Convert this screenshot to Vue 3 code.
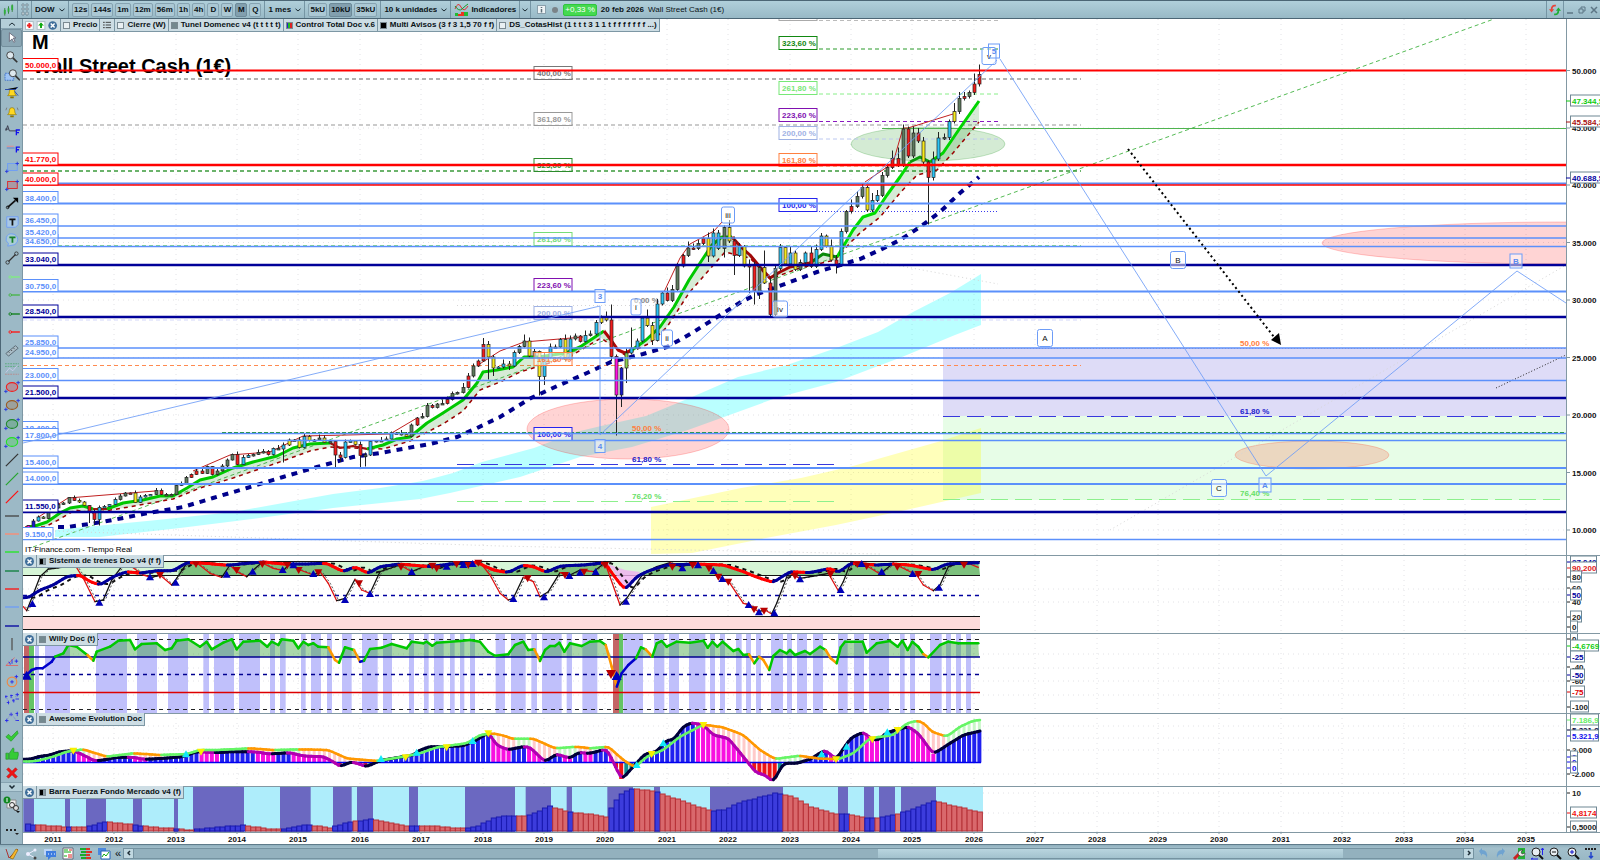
<template>
  <div class="platform">
    <header class="topbar">
      <button class="flat" aria-label="Tipo de vela">
        <svg width="13" height="14" viewBox="0 0 14 14">
          <path d="M3 5v8M7 3v8M11 1v8" stroke="#2f7d32" />
          <path d="M2 7h2v4H2zM6 5h2v4H6zM10 2h2v5h-2z" fill="#2fae3a" />
        </svg>
      </button>
      <i class="sep"></i>
      <button class="flat grip" aria-label="Mover">
        <svg width="8" height="13" viewBox="0 0 8 13">
          <path d="M1 1h2v2H1zM5 1h2v2H5zM1 5h2v2H1zM5 5h2v2H5zM1 9h2v3H1zM5 9h2v3H5z" fill="#e4eef2" stroke="#5c7482" stroke-width=".7" />
        </svg>
      </button>
      <i class="sep"></i>
      <label class="drop">
        <select aria-label="Valor"><option>DOW</option></select>
        <svg width="6" height="4" viewBox="0 0 6 4"><path d="M.5.8 3 3 5.500.8" class="chev" /></svg>
      </label>
      <i class="sep"></i>
      <div class="group">
        <button v-for="t in timeframes" :key="t" class="chip" :class="{ active: t === 'M' }">{{ t }}</button>
      </div>
      <i class="sep"></i>
      <label class="drop">
        <select aria-label="Periodo"><option>1 mes</option></select>
        <svg width="6" height="4" viewBox="0 0 6 4"><path d="M.5.8 3 3 5.500.8" class="chev" /></svg>
      </label>
      <i class="sep"></i>
      <div class="group">
        <button v-for="u in units" :key="u" class="chip" :class="{ active: u === '10kU' }">{{ u }}</button>
      </div>
      <i class="sep"></i>
      <label class="drop">
        <select aria-label="Unidades"><option>10 k unidades</option></select>
        <svg width="6" height="4" viewBox="0 0 6 4"><path d="M.5.8 3 3 5.500.8" class="chev" /></svg>
      </label>
      <i class="sep"></i>
      <button class="flat indicators">
        <svg width="15" height="14" viewBox="0 0 15 14">
          <path d="M1 6Q4-2 7 4t7-1" fill="none" stroke="#d33" />
          <path d="M1 3q4 6 7 3t6-5" fill="none" stroke="#1a9b2c" />
          <path d="M1 10h3v3H1zM10 9h4v4h-4z" fill="#22bb33" />
          <path d="M4 11h3v2H4zM7 9h3v4H7z" fill="#ee3322" />
        </svg>
        <span>Indicadores</span>
      </button>
      <i class="sep"></i>
      <button class="flat" aria-label="Más indicadores">
        <svg width="6" height="4" viewBox="0 0 6 4"><path d="M.5.8 3 3 5.500.8" class="chev" /></svg>
      </button>
      <i class="sep"></i>
      <div class="quote">
        <svg width="9" height="9" viewBox="0 0 9 9">
          <rect x=".5" y=".5" width="8" height="8" fill="#eef3f5" stroke="#8aa0ac" />
          <path d="M4.500 2v1M4.500 4v3.500" stroke="#5b6d78" stroke-width="1.500" />
        </svg>
        <i class="dot"></i>
        <span class="change">+0,33 %</span>
        <b>20 feb 2026</b>
        <span>Wall Street Cash (1€)</span>
      </div>
      <div class="window-buttons">
        <i class="sep"></i>
        <button class="flat" aria-label="Actualizar">
          <svg width="12" height="12" viewBox="0 0 14 14">
            <path d="M8 2Q3 1 3 7" fill="none" stroke="#e8443a" stroke-width="2" />
            <path d="M0 6h6L3 10z" fill="#e8443a" />
            <path d="M6 12q5 1 5-5" fill="none" stroke="#1fae35" stroke-width="2" />
            <path d="M8 8h6l-3-4z" fill="#1fae35" />
          </svg>
        </button>
        <i class="sep"></i>
        <button class="flat win" aria-label="Minimizar">
          <svg width="8" height="8" viewBox="0 0 8 8"><path d="M1 7h6" stroke="#5d7685" stroke-width="1.500" /></svg>
        </button>
        <button class="flat win" aria-label="Restaurar">
          <svg width="8" height="8" viewBox="0 0 8 8"><path d="M1 3h4v4H1zM3 3V1h4v4H5" fill="none" stroke="#5d7685" /></svg>
        </button>
        <button class="flat win" aria-label="Cerrar">
          <svg width="8" height="8" viewBox="0 0 8 8"><path d="M1 1l6 6M7 1 1 7" stroke="#5d7685" stroke-width="1.500" /></svg>
        </button>
      </div>
    </header>

    <div class="workspace">
      <nav class="tools" aria-label="Herramientas de dibujo">
        <button class="scroll-tools" aria-label="Subir">
          <svg width="8" height="4" viewBox="0 0 8 4"><path d="M1 3.500 4 1l3 2.500" class="chev" /></svg>
        </button>
        <div class="tool-list">
          <button v-for="(icon, i) in toolIcons" :key="i" class="tool" :class="{ selected: i === 0 }" :aria-label="'Herramienta ' + (i + 1)">
            <svg width="16" height="14" viewBox="0 0 18 16" v-html="icon"></svg>
          </button>
        </div>
        <button class="scroll-tools down" aria-label="Bajar">
          <svg width="8" height="4" viewBox="0 0 8 4"><path d="M1.500.5 4 3l2.500-2.500" class="chev" stroke-width="1.500" /></svg>
        </button>
        <button class="tool-large" aria-label="Propiedades">
          <svg width="18" height="18" viewBox="0 0 18 18">
            <path d="M4 4h9v8H4z" fill="#eee" stroke="#888" />
            <circle cx="4" cy="4" r="3.500" fill="#118822" />
            <path d="M4 2v4" stroke="#fff" />
            <circle cx="9" cy="9" r="2.500" fill="#eee" stroke="#333" />
            <circle cx="13" cy="12" r="2.500" fill="#ddd" stroke="#333" />
            <path d="M13 15h4l-2 2z" fill="#111" />
          </svg>
        </button>
        <button class="tool-large" aria-label="Más">
          <svg width="18" height="10" viewBox="0 0 18 10">
            <path d="M3 3h2v2H3zM7 3h2v2H7zM11 3h2v2h-2zM12 7h4l-2 2z" fill="#222" />
          </svg>
        </button>
      </nav>

      <main class="charts">
        <!-- Price -->
        <section class="pane">
          <div class="pane-tabs">
            <span class="tab">
              <svg width="33" height="11" viewBox="0 0 34 11">
                <rect x=".5" y="1.500" width="8" height="8" fill="#fff" stroke="#aabbc4" />
                <path d="M4.500 3v5M2 5.500h5" stroke="#e22" stroke-width="2" />
                <rect x="12.500" y="1.500" width="8" height="8" fill="#fff" stroke="#aabbc4" />
                <path d="M16.500 3.500V8" stroke="#1a1" stroke-width="2" /><path d="M13.500 5.500h6l-3-3z" fill="#1a1" />
                <circle cx="28.500" cy="5.500" r="4.500" fill="#3f6e9a" />
                <path d="m26.500 3.500 4 4m0-4-4 4" stroke="#fff" stroke-width="1.500" />
              </svg>
            </span>
            <button class="tab"><i class="swatch"></i>Precio</button>
            <button class="tab list-tab" aria-label="Lista">
              <svg width="8" height="8" viewBox="0 0 9 8"><path d="M0 1h2M0 4h2M0 7h2M3 1h6M3 4h6M3 7h6" stroke="#333" /></svg>
            </button>
            <button class="tab"><i class="swatch"></i>Cierre (W)</button>
            <button class="tab"><i class="swatch grey"></i>Tunel Domenec v4 (t t t t t)</button>
            <button class="tab"><i class="swatch stripes"></i>Control Total Doc v.6</button>
            <button class="tab"><i class="swatch black"></i>Multi Avisos (3 f 3 1,5 70 f f)</button>
            <button class="tab"><i class="swatch"></i>DS_CotasHist (1 t t t 3 1 1 t f f f f f f f ...)</button>
          </div>
          <svg class="plot" viewBox="23 19 1577 536">
            <line v-for="x in yearX" :key="x" :x1="x" :x2="x" y1="19" y2="555" class="grid" />
            <line v-for="v in priceTicks" :key="v" x1="23" x2="1566" :y1="py(v)" :y2="py(v)" class="grid" />

            <rect x="943" y="348" width="623" height="68" fill="#dedcf7" />
            <rect x="943" y="416" width="623" height="84" fill="#e7fde7" />
            <polygon :points="cyanCloud" fill="#00ffff" fill-opacity=".27" />
            <polygon :points="yellowCloud" fill="#ffff00" fill-opacity=".27" />
            <ellipse v-for="e in ellipses" :key="e.cx" :cx="e.cx" :cy="e.cy" :rx="e.rx" :ry="e.ry" :fill="e.c" :stroke="e.c" fill-opacity=".17" stroke-opacity=".2" />
            <path d="M33 547 1494 19" class="thin" stroke="#55bb55" stroke-dasharray="4 3" />
            <path d="M23 530 500 546 880 554M852 257 998 284M1110 530 1566 265M457 305.500H836" class="thin" stroke="#d6d6d6" stroke-dasharray="1 3" />
            <path d="M1496 388 1566 355" class="thin" stroke="#222" stroke-dasharray="1 2" />
            <path d="M882 128.500H1566" stroke="#4fb34f" />

            <line v-for="(f, i) in fibLines" :key="'f' + i" :x1="f.x1" :x2="f.x2" :y1="f.y" :y2="f.y" :stroke="f.c" :stroke-width="f.w || 1" :stroke-dasharray="f.d" />
            <text v-for="(f, i) in fibTexts" :key="'t' + i" :x="f.x" :y="f.y" :fill="f.c">{{ f.t }}</text>

            <text x="32" y="49" class="title">M</text>
            <text x="33" y="73" class="title">Wall Street Cash (1€)</text>
            <text x="25" y="552" class="plain">IT-Finance.com - Tiempo Real</text>

            <polygon :points="tunnel" fill="#1a8f1a" fill-opacity=".18" />
            <polyline :points="slowMa" fill="none" stroke="#00008b" stroke-width="4" stroke-dasharray="6 6" />
            <polyline v-for="(z, i) in zigzags" :key="'z' + i" :points="z" fill="none" stroke="#c02020" />
            <polyline :points="lowerMa" fill="none" stroke="#990000" stroke-width="1.500" stroke-dasharray="4 4" />
            <polyline v-for="(m, i) in fastMa" :key="'m' + i" :points="m.p" fill="none" :stroke="m.c" :stroke-width="m.w" stroke-linejoin="round" />
            <g v-for="(k, i) in candles" :key="'k' + i">
              <line :x1="k.x" :x2="k.x" :y1="k.hi" :y2="k.lo" stroke="#222" />
              <rect :x="k.x - 1.500" :y="k.top" width="3" :height="k.h" :fill="k.c" stroke="#222" stroke-width=".7" />
            </g>
            <g v-for="(f, i) in fibBoxes" :key="'b' + i">
              <rect :x="f.x" :y="f.y - 12.500" width="38" height="13" fill="#fff" fill-opacity=".6" :stroke="f.c" />
              <text :x="f.x + 3" :y="f.y - 3" :fill="f.c">{{ f.t }}</text>
            </g>

            <line v-for="l in levels" :key="'l' + l.v" x1="23" x2="1566" :y1="py(l.v)" :y2="py(l.v)" :stroke="l.c" :stroke-width="l.w" />
            <g v-for="l in levelLabels" :key="'v' + l.v">
              <rect x="22" :y="py(l.v) - 12" :width="l.v < 10000 ? 31 : 36" height="12" fill="#fff" :stroke="l.c" />
              <text x="25" :y="py(l.v) - 3" :fill="l.c">{{ l.t }}</text>
            </g>

            <path d="M23 443 600 306V435L997 60M1000 59 1266 476 1517 271 1566 303" fill="none" stroke="#6d9cf7" stroke-opacity=".85" />
            <path d="M1128 149 1274 337" stroke="#000" stroke-width="2" stroke-dasharray="2 3" />
            <path d="M1271 340 1279 333 1281 345Z" />
            <g v-for="(w, i) in waves" :key="'w' + i">
              <rect :x="w.x - w.w / 2" :y="w.y - w.h / 2" :width="w.w" :height="w.h" :rx="w.r" fill="#fff" :fill-opacity="w.clear ? 0 : 0.5" stroke="#6d9cf7" />
              <text :x="w.x" :y="w.y + 3" text-anchor="middle" :class="{ plain: w.r }" :fill="w.r ? '#111' : '#5a8af0'">{{ w.t }}</text>
            </g>

            <rect x="1566" y="19" width="34" height="536" fill="#fff" />
            <path d="M1566.500 19V555" stroke="#8298a3" />
            <g v-for="v in priceTicks" :key="'p' + v">
              <path :d="`M1567 ${py(v)}h3`" stroke="#8298a3" />
              <text x="1572" :y="py(v) + 3" fill="#111">{{ v / 1000 }}.000</text>
            </g>
            <g v-for="a in priceTags" :key="a.t">
              <path :d="`M1566 ${a.y}h4`" :stroke="a.c" />
              <rect x="1570.500" :y="a.y - 6" width="34" height="11" class="tag" />
              <text x="1572" :y="a.y + 3" :fill="a.c">{{ a.t }}</text>
            </g>
          </svg>
        </section>

        <!-- Indicators -->
        <section v-for="p in panes" :key="p.id" class="pane">
          <div class="pane-tabs">
            <button class="tab" :aria-label="'Cerrar ' + p.title">
              <svg width="9" height="9" viewBox="0 0 9 9">
                <circle cx="4.500" cy="4.500" r="4.500" fill="#3f6e9a" />
                <path d="m2.500 2.500 4 4m0-4-4 4" stroke="#fff" stroke-width="1.500" />
              </svg>
            </button>
            <span class="tab"><i class="swatch" :class="p.swatch"></i>{{ p.title }}</span>
          </div>
          <svg class="plot" :viewBox="`23 ${p.y} 1577 ${p.h}`">
            <line v-for="x in yearX" :key="x" :x1="x" :x2="x" :y1="p.y" :y2="p.y + p.h" class="grid" />
            <line v-for="y in p.rows" :key="y" x1="23" x2="1566" :y1="y" :y2="y" class="grid" />

            <g v-if="p.id === 'trenes'">
              <rect x="23" y="562" width="957" height="13" fill="#d6f5d6" />
              <polygon :points="trenFill" fill="#007800" fill-opacity=".42" />
              <rect x="23" y="617" width="957" height="12" fill="#fddbdb" />
              <path d="M23 561.500H980M23 575.500H980M23 616.500H980M23 629.500H980" stroke="#111" />
              <path d="M23 595.500H980" stroke="#0000a0" stroke-width="1.500" stroke-dasharray="4 4" />
              <polygon points="605,563 612,569 622,584 626,588 640,572 625,570" fill="#f0b0f0" fill-opacity=".8" />
              <polyline :points="trenLag" fill="none" stroke="#111" stroke-width="2" stroke-dasharray="4 4" />
              <polyline :points="trenFastLag" fill="none" stroke="#555" stroke-dasharray="2 2" />
              <path v-for="(s, i) in trenFast" :key="i" :d="s.d" :stroke="s.up ? '#111' : '#dd1111'" stroke-width="1.300" stroke-linecap="round" />
              <path v-for="(s, i) in trenSlow" :key="'s' + i" :d="s.d" :stroke="s.up ? '#000099' : '#ff0000'" stroke-width="3" stroke-linecap="round" />
              <path v-for="(m, i) in trenMarks" :key="'m' + i" :d="m.d" :fill="m.c" />
            </g>

            <g v-else-if="p.id === 'willy'">
              <rect v-for="(b, i) in willyBands" :key="i" :x="b.x" y="633" :width="b.w" height="80" fill="#c0c0fb" />
              <path d="M24 646h5v67h-5zM613 633h6v80h-6z" fill="#c46464" />
              <path d="M29 646h5v67h-5zM619 633h4v80h-4z" fill="#64c464" />
              <polygon :points="willyFill" fill="#2a9a2a" fill-opacity=".4" />
              <path d="M23 639.500H980M23 709.500H980" stroke="#222" stroke-dasharray="4 4" />
              <path d="M23 657H980" stroke="#000090" stroke-width="1.500" />
              <path d="M23 674.500H980" stroke="#000090" stroke-width="1.500" stroke-dasharray="4 4" />
              <path d="M23 692.500H980" stroke="#dd0000" stroke-width="1.500" />
              <path v-for="(s, i) in willyLine" :key="'w' + i" :d="s.d" :stroke="s.c" stroke-width="2.500" stroke-linecap="round" />
              <path v-for="(m, i) in willyMarks" :key="'m' + i" :d="m.d" :fill="m.c" />
            </g>

            <g v-else-if="p.id === 'awesome'">
              <g v-for="(b, i) in aoBars" :key="i">
                <line :x1="b.x" :x2="b.x" :y1="b.s" :y2="b.a" :stroke="b.pale" stroke-width="3" />
                <line :x1="b.x" :x2="b.x" y1="762.500" :y2="b.a" :stroke="b.c" stroke-width="4" />
              </g>
              <path d="M23 762.500H981" stroke="#0000ee" stroke-width="1.500" />
              <path v-for="(s, i) in aoLine" :key="'a' + i" :d="s.d" :stroke="s.up ? '#000038' : '#b000b0'" stroke-width="3" stroke-linecap="round" />
              <path v-for="(s, i) in aoSignal" :key="'s' + i" :d="s.d" :stroke="s.up ? '#66f566' : '#ff9800'" stroke-width="2.500" stroke-linecap="round" />
              <path v-for="(m, i) in aoMarks" :key="'m' + i" :d="m.d" :fill="m.c" />
            </g>

            <g v-else>
              <rect x="23" y="786" width="960" height="46" fill="#aeedfb" />
              <rect v-for="(b, i) in fuerzaBands" :key="i" :x="b.x" y="786" :width="b.w" height="46" fill="#6b68c1" />
              <rect v-for="(b, i) in fuerzaBars" :key="'b' + i" :x="b.x - 2" :y="b.y" width="5" :height="831 - b.y" :fill="b.up ? '#3c3cdc' : '#d9686c'" :stroke="b.up ? '#1a1ab0' : '#b83238'" />
            </g>

            <rect x="1566" :y="p.y" width="34" :height="p.h" fill="#fff" />
            <path :d="`M1566.500 ${p.y}v${p.h}`" stroke="#8298a3" />
            <g v-for="(a, i) in p.labels" :key="i">
              <path :d="`M1567 ${a.y}h3`" :stroke="a.c" />
              <rect v-if="a.w" x="1570.500" :y="a.y - 6" :width="a.w" height="11" class="tag" />
              <text x="1572" :y="a.y + 3" :fill="a.c">{{ a.t }}</text>
            </g>
            <path :d="`M23 ${p.y + 0.5}H1600`" stroke="#8298a3" />
          </svg>
        </section>

        <svg class="plot" viewBox="23 832 1577 12">
          <path d="M23 832.500H1600" stroke="#8298a3" />
          <g v-for="(x, i) in yearX" :key="x">
            <path :d="`M${x} 832v2`" stroke="#8298a3" />
            <text :x="x" y="842" text-anchor="middle" fill="#111">{{ 2011 + i }}</text>
          </g>
        </svg>
      </main>
    </div>

    <footer class="bottombar">
      <button class="flat first" aria-label="Dibujar">
        <svg width="14" height="13" viewBox="0 0 14 13">
          <path d="M1 2l3 9 9-9" fill="none" stroke="#a33" /><path d="m5 11 6-9 2 1-5 9z" fill="#f5b82e" stroke="#8a5a00" stroke-width=".6" />
        </svg>
      </button>
      <button v-for="(icon, i) in footerIcons" :key="i" class="flat" :aria-label="'Acción ' + (i + 1)">
        <svg width="14" height="13" viewBox="0 0 14 13" v-html="icon"></svg>
      </button>
      <button class="flat collapse">«</button>
      <button class="arrow" aria-label="Desplazar a la izquierda">
        <svg width="4" height="6" viewBox="0 0 4 6"><path d="M3 1 1 3l2 2" class="chev" stroke-width="1.500" /></svg>
      </button>
      <div class="track"><div class="thumb"></div></div>
      <button class="arrow" aria-label="Desplazar a la derecha">
        <svg width="4" height="6" viewBox="0 0 4 6"><path d="m1 1 2 2-2 2" class="chev" stroke-width="1.500" /></svg>
      </button>
      <div class="zoom-buttons">
        <button v-for="(icon, i) in zoomIcons" :key="i" class="flat" :aria-label="'Zoom ' + (i + 1)">
          <svg width="14" height="13" viewBox="0 0 14 13" v-html="icon"></svg>
        </button>
      </div>
    </footer>
  </div>
</template>

<script setup>
const timeframes = ['12s', '144s', '1m', '12m', '56m', '1h', '4h', 'D', 'W', 'M', 'Q'];
const units = ['5kU', '10kU', '35kU'];

// ---------- scales ----------
const py = (v) => Math.round((70.3 + (50000 - v) * 0.01149) * 2) / 2;
const mx = (m) => 53.2 + m * 5.117; // months since January 2011
const yearX = Array.from({ length: 25 }, (_, i) => Math.round(52.7 + i * 61.4));
const priceTicks = [50000, 45000, 40000, 35000, 30000, 25000, 20000, 15000, 10000];

// ---------- toolbar icons ----------
const blue = '#2433dd';
const seg = (c) => `<path d="M8 8h10" stroke="${c}" stroke-width="1.5"/><circle cx="7" cy="8" r="1.500" fill="none" stroke="${c}"/>`;
const diag = (c) => `<path d="M2 15 16 1" stroke="${c}" stroke-width="1.500"/>`;
const flatLine = (c) => `<path d="M1 8h16" stroke="${c}" stroke-width="1.500"/>`;
const oval = (c) => `<ellipse cx="9" cy="8" rx="6.500" ry="5" fill="${c}" fill-opacity=".25" stroke="${c}" stroke-width="1.200"/><path d="M14 3h4M16 1v4M0 13h4M2 11v4" stroke="${blue}"/>`;
const box = (c) => `<rect x="4" y="4" width="11" height="8" fill="${c}" fill-opacity=".2" stroke="${c}"/><path d="M13 4h4M15 2v4M1 13h4M3 11v4" stroke="${blue}"/>`;
const lens = '<circle cx="7" cy="6" r="4" fill="#dde8ee" stroke="#333"/><path d="m10 9 5 5" stroke="#333" stroke-width="2"/>';
const bell = '<path d="M4 11q2-1 2-5 0-3 3-3t3 3q0 4 2 5z" fill="#ffd820" stroke="#8b7300" stroke-width=".7"/><path d="M7 13h4" stroke="#8b7300" stroke-width="2"/>';

const toolIcons = [
  '<path d="M6 2v10l3-3 2 4 1.500-1-2-4h3z" fill="#fff" stroke="#667"/>',
  lens,
  '<rect x="1" y="6" width="10" height="8" fill="#9ec4f5" stroke="#3b70c8" stroke-dasharray="2 1"/><g transform="translate(3 0)">' + lens + '</g>',
  bell + '<path d="M1 4h12l3-3M12 6l4 5" stroke="#24a" />',
  bell + '<path d="M3 3 2 6M15 3l1 3" stroke="#777"/>',
  '<path d="M2 9 4 3l2 6M1 7h4M6 9h8" stroke="#334" fill="none"/><path d="M14 14V8h4M14 11h3" stroke="#11e" stroke-width="1.500" fill="none"/>',
  '<path d="M3 6h8" stroke="#e88"/><path d="M3 8h9" stroke="#57c"/><path d="M14 13V7h4M14 10h3" stroke="#11e" stroke-width="1.500" fill="none"/>',
  box('#6d9cf7'),
  box('#e02020'),
  '<path d="m4 13 9-8" stroke="#111" stroke-width="2"/><path d="M10 2h6v6z"/><circle cx="4" cy="13" r="1.500" fill="none" stroke="#111"/>',
  '<path d="M3 2h13v9l-3 3H3z" fill="#a9c8e4" stroke="#6d9cf7"/><path d="M6 5h7M9.500 5v7" stroke="#111" stroke-width="2"/>',
  '<path d="M9 1a6 6 0 1 1 0 13l-5 1 1-3A6 6 0 0 1 9 1z" fill="#a9ccd6" stroke="#6d9cf7"/><path d="M6 5h7M9.500 5v6" stroke="#18802a" stroke-width="2"/>',
  '<path d="m5 12 8-8" stroke="#333" stroke-width="1.500"/><circle cx="4" cy="13" r="2" fill="none" stroke="#333"/><circle cx="14" cy="3" r="2" fill="none" stroke="#333"/>',
  seg('#7ef07e'),
  seg('#44b544'),
  seg('#0b7d16'),
  seg('#ff1010'),
  '<path d="M2 12 13 3l3 3L5 15z" fill="#a9bcc6" stroke="#55646e"/><path d="m5 10 1 1M8 8l1 1M11 6l1 1" stroke="#333"/>',
  '<path d="M1 2h16M1 5h16" stroke="#55aa77" stroke-dasharray="2 1"/><path d="m2 12 4-5 4 3 5-6" stroke="#cce" fill="none"/><path d="M1 14h16" stroke="#b88" stroke-dasharray="2 1"/>',
  oval('#f01f1f'),
  oval('#9b5a20'),
  oval('#1f8a2a'),
  oval('#22e022'),
  diag('#333'),
  diag('#27a52f'),
  diag('#ff1010'),
  flatLine('#444'),
  flatLine('#ff8a70'),
  flatLine('#20e820'),
  flatLine('#0b7d3a'),
  flatLine('#ff1010'),
  flatLine('#6d9cf7'),
  flatLine('#0000a0'),
  '<path d="M9 1v14" stroke="#555" stroke-width="1.500"/>',
  '<path d="M2 12 12 3M2 12h14" stroke="#d66" /><path d="M7 11q0-3-2-3M9 5v5M12 7h4M14 5v4" stroke="#22e" fill="none"/>',
  '<circle cx="9" cy="9" r="5.500" fill="none" stroke="#ee8844" stroke-width="1.300"/><path d="M7 9h4M9 7v4M14 1v4M12 3h4" stroke="#22e"/>',
  '<path d="M1 5h3M3 12h3M7 4h3M9 10h3M13 3h4M13 8h4M15 1v4M2 4v3M8 3v4M5 10v4M11 8v4" stroke="#22e"/><path d="m3 7 2 4M9 6l1 4M13 5l2 3" stroke="#77c" stroke-dasharray="1 1"/>',
  '<path d="M1 12h4M3 10v4M6 5h4M8 3v4M13 12h4M13 4h3M15 2v5" stroke="#22e"/><path d="m4 10 4-6 6 8" stroke="#77c" fill="none" stroke-dasharray="1 1"/>',
  '<path d="m2 9 3-3 3 3 7-7 1 3-8 9z" fill="#35cc35" stroke="#16861b" stroke-width=".6"/>',
  '<path d="M2 7h3v7H2zM6 7l4-6q2 0 1 5h5q1 2-1 8H6z" fill="#35cc35" stroke="#16861b" stroke-width=".6"/>',
  '<path d="m3 4 2-2 4 4 4-4 2 2-4 4 4 4-2 2-4-4-4 4-2-2 4-4z" fill="#f01515" stroke="#b00" stroke-width=".6"/>',
];

const footerIcons = [
  '<path d="m3 7 7-4M3 7l7 4" stroke="#eef"/><circle cx="3" cy="7" r="2" fill="#eef"/><circle cx="10" cy="3" r="1.500" fill="#eef"/><circle cx="10" cy="11" r="1.500" fill="#444"/>',
  '<path d="M1 2h8v6H1z" fill="#bcd4f5"/><path d="M3 4h10v6H8l-3 3v-3H3z" fill="#3d7de0"/><path d="M5 7h1M8 7h1M11 7h1" stroke="#fff"/>',
  '<path d="M2 1h10v11H2z" fill="#fff" stroke="#667"/><path d="M3 3h4M3 5h7M3 9h3" stroke="#1a1"/><path d="M8 3h3M7 8h4M7 10h4" stroke="#d22"/>',
  '<path d="M1 1h6v2H1zM2 4h5v2H2zM1 7h6v2H1zM2 10h5v2H2z" fill="#1aaa2c"/><path d="M7 1h4v2H7zM7 4h6v2H7zM7 7h4v2H7zM7 10h5v2H7z" fill="#dd3324"/>',
  '<path d="M1 1h8v7H1z" fill="#4b88dd"/><path d="M4 4h9v8H4z" fill="#fff" stroke="#2764bb"/><path d="m5 10 2-3 2 2 3-4" stroke="#1a1" fill="none"/>',
];

const zoomLens = '<circle cx="6" cy="5" r="4" fill="#e8eef2" stroke="#222"/><path d="m9 8 4 4" stroke="#111" stroke-width="2"/>';
const zoomIcons = [
  '<path d="m3 4 3-3v2q6 0 5 8-1-4-5-4v2z" fill="#6fa3d0"/>',
  '<path d="M11 4 8 1v2q-6 0-5 8 1-4 5-4v2z" fill="#6fa3d0"/>',
  '<path d="M6 1h7v11H6z" fill="#24b336"/><path d="m2 12 6-6" stroke="#c22" stroke-width="3"/><path d="M6 7q0-4 5-4L9 5l1 2 3-1q0 4-5 3z" fill="#eee" stroke="#333" stroke-width=".6"/>',
  zoomLens + '<path d="M12.500 1v7M11 3l1.500-2L14 3M1 12h7M3 11l-2 1" stroke="#22e" fill="none"/>',
  zoomLens + '<path d="M4 5h4" stroke="#111"/>',
  zoomLens + '<path d="M4 5h4M6 3v4" stroke="#11c"/>',
  '<path d="M1 2h12" stroke="#222" stroke-width="2" stroke-dasharray="2 1"/><path d="M7 5v6M5 9l2 2 2-2" stroke="#24c" stroke-width="1.500" fill="none"/>',
];

// ---------- monthly candles, August 2010 to February 2026 ----------
const years = [
  ['10.01 10.79 11.12 11.01 11.58', 'mnclg'],
  ['11.89 12.23 12.32 12.81 12.57 12.41 12.14 11.61 10.91 11.96 12.05 12.22', 'ggggryyrrccc'],
  ['12.63 12.95 13.21 13.21 12.39 12.88 13.01 13.09 13.44 13.10 13.03 13.10', 'cggrycccgrgg'],
  ['13.86 14.05 14.58 14.84 15.12 14.91 15.50 14.81 15.13 15.55 16.09 16.58', 'gcgrrrgrgggg'],
  ['15.70 16.32 16.46 16.58 16.72 16.83 16.56 17.10 17.04 17.39 17.83 17.82', 'rccgggrcgcyg'],
  ['17.16 18.13 17.78 17.84 18.01 17.62 17.69 16.53 16.28 17.66 17.72 17.43', 'ycycgygrrccy'],
  ['16.47 16.52 17.69 17.77 17.79 17.93 18.43 18.40 18.31 18.14 19.12 19.76', 'rgcgggcggygr'],
  ['19.86 20.81 20.66 20.94 21.01 21.35 21.89 21.95 22.41 23.38 24.27 24.72', 'ggrggrgggrgr'],
  ['26.15 25.03 24.10 24.16 24.42 24.27 25.42 25.97 26.46 25.12 25.54 23.33', 'ryyccycggygy'],
  ['25.00 25.92 25.93 26.59 24.82 26.60 26.86 26.40 26.92 27.05 28.05 28.54', 'ccgcycgrcgcy'],
  ['28.26 25.10 21.75 24.10 25.38 25.81 26.43 28.43 27.78 26.50 29.64 30.61', 'yrmnlcccyycc'],
  ['29.98 30.93 32.98 33.87 34.53 34.50 34.94 35.36 33.84 35.82 34.48 36.34', 'rggrgrgryccg'],
  ['35.13 33.89 34.68 32.98 32.99 30.78 32.85 31.51 28.73 32.73 34.59 33.15', 'yrcyrrgyrgcy'],
  ['34.09 32.66 33.27 34.10 32.91 34.41 35.56 34.72 33.51 33.05 35.95 37.69', 'cygcrccyyrcg'],
  ['38.15 39.00 39.81 37.82 38.69 39.12 40.84 41.56 42.33 41.76 44.91 42.54', 'rggyccggrrgr'],
  ['44.54 43.84 42.00 40.67 42.27 44.09 44.13 45.54 46.40 47.56 47.72 48.06', 'gryrccgcygrg'],
  ['48.80 49.65', 'rr'],
];
const bodyColors = { g: '#5d7a5d', r: '#f21d1d', y: '#f7ea1c', c: '#2cc4f5', m: '#ff10e0', n: '#1a1acc', l: '#8fd14f' };
// months whose wick runs well past the body
const lows = { 7: 10.6, 8: 10.55, 9: 10.4, 45: 15.85, 55: 15.37, 56: 15.9, 60: 15.45, 61: 15.5, 85: 23.1, 86: 23.4, 89: 23.9, 95: 21.7, 96: 22.6, 109: 24.7, 110: 18.2, 111: 20.7, 112: 22.8, 117: 26.1, 128: 33.3, 131: 33.7, 133: 32.2, 136: 30.6, 137: 29.6, 138: 30.1, 140: 28.6, 141: 28.6, 153: 32.3, 171: 36.6, 172: 40.4 };
const highs = { 84: 26.7, 92: 27.0, 109: 29.6, 113: 27.6, 116: 29.2, 118: 30.1, 132: 36.95, 139: 34.3, 145: 34.3, 165: 43.3, 167: 45.1, 168: 45.1, 169: 45.0, 180: 49.7, 181: 50.5 };

const closes = years.flatMap(([c]) => c.split(' ').map(Number));
const codes = years.map((y) => y[1]).join('');
const candles = closes.map((close, i) => {
  const open = i ? closes[i - 1] : 10.4;
  const m = i - 5;
  const hi = highs[m] || Math.max(open, close) + close * 0.004 * (1 + (i * 7) % 4);
  const lo = lows[m] || Math.min(open, close) - close * 0.004 * (1 + (i * 5) % 5);
  const top = py(Math.max(open, close) * 1000);
  return {
    x: Math.round(mx(m)) + 0.5,
    top,
    h: Math.max(py(Math.min(open, close) * 1000) - top, 1.5),
    hi: py(hi * 1000),
    lo: py(lo * 1000),
    c: bodyColors[codes[i]],
  };
});

// ---------- price overlays ----------
const cyanCloud = '55,530 157,520 233,512 283,503 333,494 380,488 423,481 453,473 482,462 534,448 576,432 601,426 646,416 692,397 738,377 787,365 839,347 878,332 913,312 950,293 973,279 981,274 981,325 955,335 902,357 836,382 776,398 724,417 688,430 632,447 580,457 520,477 450,493 420,499 333,508 267,517 180,528 100,537 55,537';
const yellowCloud = '651,507 741,488 801,478 853,466 941,441 981,428 981,493 906,510 836,525 766,538 692,553 651,554';
const ellipses = [
  { cx: 628, cy: 429, rx: 101, ry: 30, c: '#ff0000' },
  { cx: 928, cy: 144, rx: 77, ry: 17, c: '#008800' },
  { cx: 1560, cy: 243, rx: 238, ry: 21, c: '#ff0000' },
  { cx: 1312, cy: 455, rx: 77, ry: 14, c: '#ff2000' },
];
const slowMa = '58,527 67,527 90,524 113,520 143,514 183,507 213,498 247,488 283,477 317,467 353,457 380,453 430,444 457,437 477,428 500,417 531,398 555,387 587,373 611,362 643,354 667,347 692,333 717,317 741,302 755,295 790,282 817,272 837,266 860,259 880,250 900,240 920,227 940,212 960,193 979,177';
const lowerMa = '25,527 45,527 60,519 75,510 93,513 123,508 173,499 200,488 233,478 277,463 310,451 330,447 353,448 383,449 410,441 443,424 463,411 480,390 500,382 520,372 569,357 601,338 625,355 650,343 667,327 689,293 709,270 725,252 750,258 770,279 800,268 835,260 850,243 860,233 880,217 900,193 917,175 937,170 953,153 979,122';
const upperMa = '27,527 35,526 47,522 60,513 70,508 83,506 93,509 107,509 123,503 143,500 160,496 173,496 187,488 200,480 213,477 233,468 253,462 277,456 293,448 310,444 330,443 340,448 353,446 367,449 383,445 397,439 410,437 427,423 443,413 463,400 477,383 483,372 497,370 513,367 524,357 538,357 566,353 580,347 604,331 611,340 618,350 625,353 632,350 646,340 660,327 674,307 689,280 702,260 712,245 722,237 732,237 741,247 750,255 760,267 770,278 780,272 790,267 810,263 823,254 837,257 843,247 853,230 863,217 875,213 887,195 900,177 910,162 920,157 930,162 943,153 960,128 979,101';
const tunnel = upperMa + ' ' + lowerMa.split(' ').reverse().join(' ');
const between = (a, b) => upperMa.split(' ').filter((p) => parseInt(p) >= a && parseInt(p) <= b).join(' ');
const fastMa = [
  { p: between(27, 93), c: '#00c800', w: 3 },
  { p: between(93, 123), c: '#a02010', w: 2 },
  { p: between(107, 330), c: '#00c800', w: 3 },
  { p: between(330, 383), c: '#a01010', w: 2 },
  { p: between(367, 604), c: '#00c800', w: 3 },
  { p: between(604, 632), c: '#b00808', w: 3 },
  { p: between(632, 732), c: '#00c800', w: 3 },
  { p: between(732, 810), c: '#a00808', w: 3 },
  { p: between(810, 837), c: '#0a8a0a', w: 3 },
  { p: between(837, 910), c: '#00dd00', w: 3 },
  { p: between(910, 930), c: '#0a9a0a', w: 3 },
  { p: between(930, 979), c: '#00d400', w: 3 },
];
const zigzags = [
  '37,518 68,498 155,491',
  '193,471 230,455 270,452 303,436 390,434 417,418',
  '478,365 500,351 524,342 583,337',
  '664,292 680,258 690,244 714,231 722,222',
  '865,182 893,163 903,128 908,128 953,114',
];

const grey = '#777';
const fibLines = [
  { x1: 819, x2: 998, y: 20.5, c: '#bbb', d: '4 3' },
  { x1: 819, x2: 998, y: 49, c: '#2b9b2b', d: '4 3' },
  { x1: 819, x2: 998, y: 94, c: '#88ee88', d: '4 3' },
  { x1: 819, x2: 998, y: 121.5, c: '#8a18c0', d: '4 3' },
  { x1: 819, x2: 998, y: 139, c: '#bcc8f0', d: '4 3' },
  { x1: 819, x2: 998, y: 166, c: '#ff8040', d: '4 3' },
  { x1: 819, x2: 998, y: 211.5, c: '#3a3aee', d: '1 2' },
  { x1: 23, x2: 1081, y: 79, c: '#999', d: '4 3', w: 1.5 },
  { x1: 23, x2: 1081, y: 125, c: '#bbb', d: '4 3', w: 1.5 },
  { x1: 23, x2: 1081, y: 171, c: '#3b9b3b', d: '4 3', w: 1.5 },
  { x1: 23, x2: 1081, y: 245.5, c: '#88dd88', d: '4 3' },
  { x1: 23, x2: 1081, y: 320, c: '#d4d8fa', d: '4 3' },
  { x1: 23, x2: 1081, y: 365.5, c: '#ff8a50', d: '4 3' },
  { x1: 222, x2: 1566, y: 432.5, c: '#229922', d: '4 2' },
  { x1: 457, x2: 836, y: 464.5, c: '#3838dd', d: '17 7' },
  { x1: 457, x2: 836, y: 501.5, c: '#8df08d', d: '17 7' },
  { x1: 943, x2: 1566, y: 348.5, c: '#e09080', d: '1 2' },
  { x1: 943, x2: 1566, y: 416.5, c: '#3838dd', d: '17 7' },
  { x1: 943, x2: 1566, y: 499.5, c: '#8df08d', d: '17 7' },
];
const fibBoxes = [
  { x: 779, y: 20, c: '#aaa', t: '' },
  { x: 779, y: 49, c: '#118811', t: '323,60 %' },
  { x: 779, y: 94, c: '#77e877', t: '261,80 %' },
  { x: 779, y: 121, c: '#8010b0', t: '223,60 %' },
  { x: 779, y: 139, c: '#9fb2e4', t: '200,00 %' },
  { x: 779, y: 166, c: '#ff8040', t: '161,80 %' },
  { x: 779, y: 211, c: '#2424ee', t: '100,00 %' },
  { x: 534, y: 79, c: grey, t: '400,00 %' },
  { x: 534, y: 125, c: '#999', t: '361,80 %' },
  { x: 534, y: 171, c: '#2b8b2b', t: '323,60 %' },
  { x: 534, y: 245, c: '#77dd77', t: '261,80 %' },
  { x: 534, y: 291, c: '#8010b0', t: '223,60 %' },
  { x: 534, y: 319, c: '#9fb2e4', t: '200,00 %' },
  { x: 534, y: 365, c: '#ff8040', t: '161,80 %' },
  { x: 534, y: 440, c: '#2424ee', t: '100,00 %' },
];
const fibTexts = [
  { x: 634, y: 303, c: '#888', t: '0,00 %' },
  { x: 632, y: 431, c: '#ff8040', t: '50,00 %' },
  { x: 632, y: 462, c: '#2020cc', t: '61,80 %' },
  { x: 632, y: 499, c: '#66e066', t: '76,20 %' },
  { x: 1240, y: 346, c: '#ff8040', t: '50,00 %' },
  { x: 1240, y: 414, c: '#2020cc', t: '61,80 %' },
  { x: 1240, y: 496, c: '#66e066', t: '76,40 %' },
];

const red = '#ff0000';
const sky = '#5b90fb';
const navy = '#000099';
const levels = [
  { v: 50000, c: red, w: 2 },
  { v: 41770, c: red, w: 2.5 },
  { v: 40160, c: '#6088ee', w: 2 },
  { v: 40000, c: red, w: 1.5 },
  { v: 38400, c: sky, w: 2 },
  { v: 36450, c: sky, w: 1.5 },
  { v: 34650, c: sky, w: 1.5 },
  { v: 35420, c: sky, w: 1.5 },
  { v: 33040, c: navy, w: 2.5 },
  { v: 30750, c: sky, w: 2 },
  { v: 28540, c: navy, w: 2.5 },
  { v: 25850, c: sky, w: 1.5 },
  { v: 24950, c: sky, w: 1.5 },
  { v: 23000, c: sky, w: 1.5 },
  { v: 21500, c: navy, w: 2.5 },
  { v: 18400, c: sky, w: 1.5 },
  { v: 17800, c: sky, w: 1.5 },
  { v: 15400, c: sky, w: 2 },
  { v: 14000, c: sky, w: 2 },
  { v: 11550, c: navy, w: 2.5 },
  { v: 9150, c: sky, w: 1.5 },
];
const levelLabels = levels
  .filter((l) => l.v !== 40160)
  .map((l) => ({ ...l, t: `${Math.floor(l.v / 1000)}.${String(l.v % 1000).padStart(3, '0')},0` }));

const waves = [
  { x: 600, y: 296, w: 10, h: 13, r: 0, t: '3' },
  { x: 600, y: 446, w: 10, h: 13, r: 0, t: '4' },
  { x: 989, y: 56, w: 14, h: 17, r: 2, t: 'v' },
  { x: 994, y: 51, w: 11, h: 14, r: 0, t: '5', clear: true },
  { x: 636, y: 307, w: 10, h: 16, r: 2, t: 'i' },
  { x: 667, y: 338, w: 11, h: 16, r: 2, t: 'ii' },
  { x: 728, y: 215, w: 13, h: 16, r: 2, t: 'iii' },
  { x: 780, y: 309, w: 15, h: 16, r: 2, t: 'iv' },
  { x: 1045, y: 338, w: 15, h: 17, r: 2, t: 'A' },
  { x: 1178, y: 260, w: 15, h: 17, r: 2, t: 'B' },
  { x: 1219, y: 488, w: 15, h: 17, r: 2, t: 'C' },
  { x: 1265, y: 485, w: 12, h: 14, r: 0, t: 'A' },
  { x: 1516, y: 261, w: 12, h: 14, r: 0, t: 'B' },
];
const priceTags = [
  { y: 101, c: '#11cc11', t: '47.344,5' },
  { y: 122, c: '#aa1111', t: '45.584,3' },
  { y: 178, c: '#0000a0', t: '40.688,5' },
];

// ---------- indicator series ----------
// Traces are kept in thirds of a pixel: the first half runs to mid 2018, the second from there on.
function trace(first, second) {
  const read = (s, ox) => s.split(' ').filter(Boolean).map((p) => {
    const [x, y] = p.split(',').map(Number);
    return [ox + x / 3, 550 + y / 3];
  });
  return [...read(first, 0), ...read(second, 510)];
}
const toPoints = (pts) => pts.map(([x, y]) => `${x.toFixed(1)},${y.toFixed(1)}`).join(' ');
function slopes(pts) {
  return pts.slice(1).map(([x, y], i) => {
    const [px, p] = pts[i];
    return { d: `M${px.toFixed(1)} ${p.toFixed(1)}L${x.toFixed(1)} ${y.toFixed(1)}`, up: y <= p, y0: p, y1: y };
  });
}
function at(pts, x) {
  const i = pts.findIndex((p) => p[0] >= x);
  if (i < 0) return pts[pts.length - 1][1];
  if (i === 0) return pts[0][1];
  const [x0, y0] = pts[i - 1];
  const [x1, y1] = pts[i];
  return y0 + ((x - x0) / (x1 - x0)) * (y1 - y0);
}
// one point per few pixels, averaged with its neighbours
function smooth(pts) {
  const out = [];
  for (let x = pts[0][0]; x < pts[pts.length - 1][0]; x += 3) {
    out.push([x, (at(pts, x - 3) + 2 * at(pts, x) + at(pts, x + 3)) / 4]);
  }
  out.push(pts[pts.length - 1]);
  return out;
}
function marks(first, second, color, up, r = 4) {
  return trace(first, second).map(([x, y]) => ({
    c: color,
    d: up ? `M${x - r} ${y + r - 1}h${2 * r}l${-r} ${-2 * r + 1}z` : `M${x - r} ${y - r + 1}h${2 * r}l${-r} ${2 * r - 1}z`,
  }));
}
function bands(first, second) {
  const read = (s, ox) => s.split(' ').map((p) => {
    const [a, b] = p.split('-').map(Number);
    return { x: ox + a / 3, w: (b - a) / 3 };
  });
  return [...read(first, 0), ...read(second, 510)];
}

const fast = trace(
  '70,170 80,182 95,145 120,80 145,57 165,55 225,45 250,85 285,155 310,150 335,90 365,50 395,50 430,75 455,82 480,75 515,105 530,85 560,40 590,38 630,70 665,82 690,45 710,65 740,80 760,60 785,38 820,55 850,62 870,40 900,60 940,75 960,65 985,100 1010,152 1035,145 1065,88 1085,120 1110,130 1140,65 1200,45 1235,65 1290,42 1320,55 1350,40 1440,37 1470,75 1500,130 1525,150',
  '10,145 40,82 70,95 90,140 115,125 150,68 180,75 210,60 250,65 285,38 300,80 330,165 350,145 400,70 440,50 480,38 510,50 560,40 600,50 620,75 640,90 660,100 700,160 720,165 745,185 765,180 785,192 800,160 835,68 870,85 930,75 955,70 985,122 1000,95 1022,38 1050,42 1075,50 1110,72 1150,40 1190,60 1220,75 1240,105 1270,122 1290,105 1315,50 1350,38 1380,42 1405,52'
);
const slow = smooth(trace(
  '70,143 85,143 120,120 160,105 200,80 240,75 270,95 300,105 340,80 380,65 420,70 470,62 520,62 560,38 620,40 680,46 740,40 790,36 850,42 920,42 980,40 1030,65 1065,50 1105,70 1140,50 1200,42 1290,50 1350,42 1430,37 1480,60 1520,67',
  '0,65 40,45 70,50 110,67 150,48 220,45 285,38 310,75 345,120 380,80 410,65 470,45 560,42 640,45 700,65 750,85 790,97 840,65 900,68 960,55 985,68 1022,40 1100,45 1150,42 1200,45 1270,60 1310,42 1405,38'
));
const trenFast = slopes(fast);
const trenSlow = slopes(slow);
const lag = (pts, dx) => pts.map(([x, y]) => [x + dx, y]).filter((p) => p[0] < 980);
const trenLag = toPoints(lag(slow, 8));
const trenFastLag = toPoints(lag(fast, 2));
const trenFill = toPoints([[178, 575], ...slow.filter((p) => p[0] >= 178).map(([x, y]) => [x, Math.min(y, 575)]), [980, 575]]);
const trenMarks = [
  ...marks('480,75 588,42 710,60 787,42 862,45 896,60 955,67 1077,100 1203,50 1297,47 1310,55 1370,42 1405,45 1435,38', '53,85 165,75 222,65 285,45 487,50 548,45 597,55 625,80 655,95 732,178 762,182 855,77 962,72 1042,42 1070,48 1162,50 1225,72 1362,44', '#b80000', false),
  ...marks('97,162 298,158 450,82 527,98 680,74 758,65 848,60 880,46 940,72 1035,150 1110,132 1235,66 1340,50 1390,45 1418,42 1540,147', '102,142 178,78 210,68 257,66 348,155 517,55 564,46 610,63 637,87 716,165 747,187 793,190 870,88 992,120 1055,42 1115,66 1208,72 1287,113', '#0000b8', true),
];

const willy = trace(
  '75,380 95,360 110,355 128,355 155,335 165,320 190,310 205,285 230,290 262,315 280,332 290,305 330,290 355,272 390,270 405,298 425,282 470,280 495,300 515,295 530,272 565,268 600,290 620,275 635,298 670,278 695,268 710,298 730,275 780,272 802,290 815,275 835,285 845,268 880,272 895,295 910,275 925,285 940,280 955,290 985,292 1005,330 1017,338 1035,292 1062,300 1080,335 1092,332 1110,297 1145,293 1175,282 1220,295 1235,275 1270,280 1280,275 1297,287 1310,278 1380,273 1410,270 1440,275 1465,305 1485,317 1525,313',
  '0,305 15,285 40,275 55,300 73,298 90,333 105,300 120,288 135,288 148,278 163,305 180,280 215,288 240,275 270,273 287,285 305,350 320,410 335,370 355,345 378,325 393,292 407,298 427,320 440,280 455,273 470,290 500,275 540,278 580,272 593,293 607,275 622,290 638,275 670,303 685,297 700,315 717,313 733,340 747,320 760,330 778,360 790,318 810,300 830,310 840,300 855,315 885,303 900,312 930,290 947,300 962,325 980,340 992,292 1005,275 1058,275 1070,308 1100,280 1140,273 1163,290 1177,272 1193,300 1207,275 1225,290 1240,312 1255,322 1290,285 1315,275 1345,280 1405,280'
);
const willyLine = slopes(willy).map((s, i) => {
  let c = '#00c800';
  if (!s.up && s.y1 > 656.5) c = '#ff9800';
  else if (s.up && s.y0 > 658 && s.y1 > 658) c = '#0000cc';
  return { d: s.d, c: i < 5 ? '#0000cc' : c };
});
const willyFill = toPoints([[55, 657], ...willy.filter((p) => p[0] >= 55).map(([x, y]) => [x, Math.min(y, 657)]), [979, 657]]);
const willyBands = bands(
  '105-117 135-210 288-381 411-471 504-564 610-627 642-702 717-780 810-825 840-857 903-917 933-963 981-996 1026-1055 1086-1133 1149-1176 1227-1242 1272-1286 1302-1331 1350-1364 1380-1393 1410-1425 1487-1515',
  '3-47 64-81 96-155 170-186 217-262 340-399 432-463 477-507 537-586 600-615 630-645 678-695 708-723 738-753 783-819 831-846 861-891 909-939 984-1013 1032-1062 1077-1137 1170-1184 1200-1215 1260-1295 1308-1323 1338-1353 1368-1383'
);
const willyMarks = [
  ...marks('', '303,372', '#b80000', false, 5),
  ...marks('80,377', '320,378', '#0000b8', true, 5),
];

const ao = trace(
  '70,628 90,628 115,620 150,615 180,605 220,602 250,615 285,633 310,630 350,622 400,622 430,628 490,625 550,620 590,605 650,608 700,605 760,605 810,612 870,608 910,618 970,620 1000,635 1020,650 1055,635 1100,650 1140,632 1200,622 1240,615 1260,600 1290,590 1340,590 1390,587 1430,570 1465,548 1490,585 1525,600',
  '0,598 40,590 60,592 105,635 140,612 180,625 205,608 240,610 290,597 305,625 335,690 365,655 405,612 440,605 470,570 490,570 520,530 545,518 580,525 610,555 655,565 700,620 740,670 760,672 790,695 820,640 860,640 900,628 945,600 980,628 1000,595 1025,562 1060,547 1090,570 1105,570 1130,548 1195,530 1225,550 1270,612 1320,580 1360,555 1410,543'
);
const signal = trace(
  '70,635 110,633 160,620 200,605 250,598 320,620 400,610 480,615 560,612 600,600 650,600 750,595 820,600 900,598 985,600 1040,625 1130,633 1200,622 1260,610 1310,592 1400,580 1440,555 1480,550 1525,560',
  '0,566 70,566 135,595 200,590 240,595 295,590 340,630 375,652 410,620 460,600 510,560 580,524 640,532 700,555 750,600 795,627 870,617 920,625 985,628 1030,610 1080,565 1150,555 1190,520 1220,512 1240,518 1265,545 1310,560 1350,530 1390,512 1410,510'
);
const aoLine = slopes(smooth(ao));
const aoSignal = slopes(smooth(signal));
const aoBars = closes.map((_, i) => {
  const x = mx(i - 5);
  const a = at(ao, x);
  const rising = a <= at(ao, x - 5);
  const s = at(signal, x);
  let c = rising ? '#2020f0' : '#f810e0';
  if (a > 762.5) c = rising ? '#109090' : '#ee1515';
  return { x, a, s, c, pale: at(signal, x) <= at(signal, x - 5) ? '#c8f7c8' : '#ffcaca' };
});
const aoMarks = [
  ...marks('220,602 603,605 1217,622 1340,592 1465,550', '425,612 580,525 978,628 1087,568 1163,540', '#f8f000', false),
  ...marks('558,613 1143,627 1250,608 1418,573', '380,645 460,580 935,613 1010,590 1132,547', '#10e8f8', true),
];

const fuerza = trace(
  '75,822 120,825 190,830 255,832 310,815 380,822 440,830 510,835 570,840 640,832 700,828 730,825 790,835 840,838 880,830 925,825 990,833 1040,818 1110,808 1170,818 1225,828 1300,828 1380,836 1430,830 1480,805 1520,797',
  '0,797 40,800 80,785 120,768 170,785 240,792 290,802 310,760 335,730 360,715 440,725 520,755 600,782 640,780 690,757 800,728 850,742 900,770 980,793 1010,792 1060,803 1110,803 1160,793 1210,777 1270,752 1330,768 1410,786'
);
const fuerzaBands = bands(
  '70-102 195-210 258-318 399-426 522-534 579-732 840-932 999-1055 1071-1119 1227-1254 1395-1545',
  '47-123 170-186 292-369 432-450 600-819 984-1014 1062-1092 1107-1155 1173-1278'
);
const fuerzaBars = closes.map((_, i) => {
  const x = mx(i - 5);
  return { x, y: Math.round(at(fuerza, x)), up: fuerzaBands.some((b) => x >= b.x && x <= b.x + b.w) };
});

const panes = [
  {
    id: 'trenes', title: 'Sistema de trenes Doc v4 (f f)', swatch: 'half', y: 555, h: 78, rows: [589, 602],
    labels: [
      { y: 562, t: '97,049', c: '#0000a0', w: 26 },
      { y: 568, t: '90,200', c: '#e02020', w: 26 },
      { y: 588, t: '60', c: '#222' },
      { y: 602, t: '40', c: '#222' },
      { y: 577, t: '80', c: '#222', w: 11 },
      { y: 595, t: '50', c: '#0000a0', w: 11 },
      { y: 617, t: '20', c: '#222', w: 11 },
      { y: 627, t: '0', c: '#222', w: 7 },
    ],
  },
  {
    id: 'willy', title: 'Willy Doc (t)', swatch: 'grey', y: 633, h: 80, rows: [654, 668, 681, 695],
    labels: [
      { y: 639, t: '0', c: '#222', w: 7 },
      { y: 667, t: '-40', c: '#222' },
      { y: 681, t: '-60', c: '#222' },
      { y: 646, t: '-4,6769', c: '#11cc11', w: 28 },
      { y: 657, t: '-25', c: '#0000a0', w: 14 },
      { y: 675, t: '-50', c: '#0000a0', w: 14 },
      { y: 692, t: '-75', c: '#dd0000', w: 14 },
      { y: 707, t: '-100', c: '#222', w: 18 },
    ],
  },
  {
    id: 'awesome', title: 'Awesome Evolution Doc', swatch: 'grey', y: 713, h: 73, rows: [726, 738, 750, 774],
    labels: [
      { y: 730, t: '5.321,9', c: '#000038', w: 28 },
      { y: 720, t: '7.186,9', c: '#66ee66', w: 28 },
      { y: 736, t: '5.321,9', c: '#1111ee', w: 28 },
      { y: 750, t: '2.000', c: '#222' },
      { y: 774, t: '-2.000', c: '#222' },
      { y: 757, t: '0', c: '#1111ee', w: 7 },
      { y: 762, t: '0', c: '#1111ee', w: 7 },
      { y: 768, t: '0', c: '#1111ee', w: 7 },
    ],
  },
  {
    id: 'fuerza', title: 'Barra Fuerza Fondo Mercado v4 (f)', swatch: 'half', y: 786, h: 46, rows: [793, 813],
    labels: [
      { y: 793, t: '10', c: '#222' },
      { y: 813, t: '4,8174', c: '#ee1111', w: 26 },
      { y: 827, t: '0,5000', c: '#222', w: 26 },
    ],
  },
];
</script>

<style>
body {
  margin: 0;
  background: #fff;
}
</style>

<style scoped>
.platform {
  display: flex;
  flex-direction: column;
  width: 100%;
  font-family: "Liberation Sans", Arial, sans-serif;
  font-size: 8px;
  font-weight: bold;
  line-height: 10px;
  color: #0a1216;
}
button,
select {
  font: inherit;
  color: inherit;
  margin: 0;
}
svg {
  display: block;
  flex: none;
}
.chev {
  fill: none;
  stroke: #1b2b34;
}

/* top bar */
.topbar {
  display: flex;
  align-items: center;
  height: 19px;
  box-sizing: border-box;
  border-top: 1px solid #4c6675;
  border-bottom: 1px solid #4c6675;
  background: linear-gradient(#b0cfda, #98b9c6);
  white-space: nowrap;
}
.sep {
  align-self: stretch;
  width: 1px;
  flex: none;
  background: #7595a4;
}
.flat {
  display: flex;
  align-items: center;
  justify-content: center;
  gap: 2px;
  padding: 0 2px;
  border: 0;
  background: none;
}
.grip {
  padding: 0 2px 0 3px;
}
.drop {
  display: flex;
  align-items: center;
  gap: 4px;
  padding: 0 3px;
}
.drop select {
  appearance: none;
  padding: 0;
  border: 0;
  background: none;
}
.group {
  display: flex;
  gap: 2px;
  padding: 0 3px;
}
.chip {
  min-width: 12px;
  height: 14px;
  padding: 0 1px;
  border: 1px solid #86a3b1;
  border-radius: 2px;
  background: #abc8d4;
  line-height: 12px;
}
.chip.active {
  background: #829fae;
  border-color: #6d8a99;
}
.indicators {
  padding: 0 3px;
}
.quote {
  display: flex;
  align-items: center;
  gap: 4px;
  padding-left: 6px;
  font-weight: normal;
}
.dot {
  width: 6px;
  height: 6px;
  margin: 0 1px 0 2px;
  border-radius: 50%;
  background: #7b8388;
}
.change {
  padding: 0 1px;
  border: 1px solid #2fc53d;
  border-radius: 2px;
  background: #45d950;
  color: #fff;
}
.window-buttons {
  display: flex;
  align-self: stretch;
  margin-left: auto;
}
.win {
  width: 12px;
  padding: 0;
}

/* left tools */
.workspace {
  display: flex;
}
.tools {
  display: flex;
  flex-direction: column;
  flex: none;
  width: 23px;
  box-sizing: border-box;
  border-left: 1px solid #4c6675;
  border-right: 1px solid #7d97a4;
  background: #9cb9c6;
}
.scroll-tools {
  display: flex;
  align-items: center;
  justify-content: center;
  height: 10px;
  padding: 0;
  border: 0;
  border-bottom: 1px solid #86a3b1;
  background: #b4ced8;
}
.scroll-tools.down {
  border-top: 1px solid #86a3b1;
}
.tool-list {
  display: flex;
  flex: 1;
  flex-direction: column;
}
.tool {
  display: flex;
  flex: 1;
  align-items: center;
  justify-content: center;
  padding: 0;
  border: 1px solid transparent;
  border-radius: 2px;
  background: none;
}
.tool.selected {
  border-color: #748f9d;
  background: #8aa6b4;
}
.tool-large {
  display: flex;
  align-items: center;
  justify-content: center;
  height: 26px;
  padding: 0;
  border: 0;
  background: none;
}

/* chart panes */
.charts {
  flex: 1;
  min-width: 0;
}
.pane {
  position: relative;
}
.plot {
  width: 100%;
  height: auto;
}
.plot text {
  font-size: 8px;
  font-weight: bold;
}
.plot .title {
  font-size: 20px;
}
.plot .plain {
  font-weight: normal;
}
.grid {
  stroke: #e2e2e6;
  stroke-dasharray: 1 4;
}
.thin {
  fill: none;
}
.tag {
  fill: #fff;
  stroke: #6f8794;
}
.pane-tabs {
  position: absolute;
  top: 0;
  left: 0;
  display: flex;
  height: 12px;
  border-bottom: 1px solid #7d97a4;
  background: #cddde4;
  white-space: nowrap;
}
.tab {
  display: flex;
  align-items: center;
  gap: 3px;
  padding: 0 2px;
  border: 0;
  border-right: 1px solid #7d97a4;
  background: none;
}
.list-tab {
  padding: 0 3px;
}
.swatch {
  width: 7px;
  height: 7px;
  box-sizing: border-box;
  border: 1px solid #7b8a92;
  background: #e9f0f3;
}
.swatch.grey {
  background: #74898f;
}
.swatch.black {
  background: #000;
}
.swatch.half {
  background: linear-gradient(90deg, #000 60%, #8a9aa2 60%);
}
.swatch.stripes {
  background: linear-gradient(90deg, #22c 30%, #2b2 30% 60%, #d22 60%);
}

/* bottom bar */
.bottombar {
  display: flex;
  align-items: center;
  height: 17px;
  box-sizing: border-box;
  border-top: 1px solid #5f7b8a;
  background: linear-gradient(#8fafbd, #a3c0cc 20%, #98b7c4);
}
.first {
  width: 23px;
}
.collapse {
  font-size: 11px;
  font-weight: normal;
}
.arrow {
  display: flex;
  align-items: center;
  justify-content: center;
  width: 11px;
  height: 11px;
  padding: 0;
  border: 1px solid #7593a1;
  background: #c0d8e1;
}
.track {
  flex: 1;
  height: 9px;
  border: 1px solid #7593a1;
  border-width: 1px 0;
  background: #93b1be;
}
.thumb {
  width: 35%;
  height: 9px;
  margin-left: 56%;
  background: linear-gradient(#b9d5df, #a3c2ce);
}
.zoom-buttons {
  display: flex;
}
</style>
